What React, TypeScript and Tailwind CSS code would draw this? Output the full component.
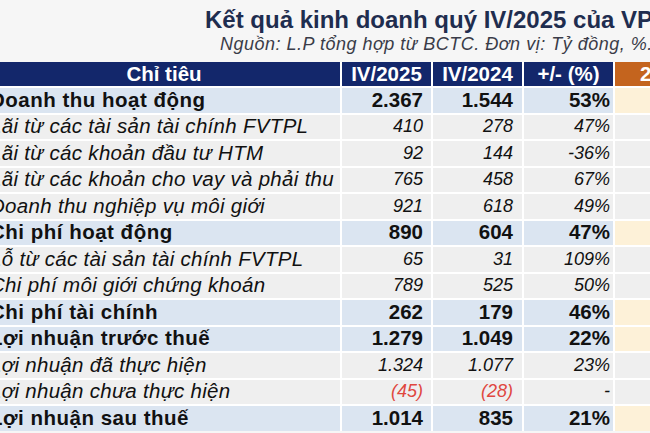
import React from "react";

type Row = {
  label: string;
  a: string;
  b: string;
  c: string;
  bold?: boolean;
  red?: boolean;
};

const rows: Row[] = [
  { label: "Doanh thu hoạt động", a: "2.367", b: "1.544", c: "53%", bold: true },
  { label: "Lãi từ các tài sản tài chính FVTPL", a: "410", b: "278", c: "47%" },
  { label: "Lãi từ các khoản đầu tư HTM", a: "92", b: "144", c: "-36%" },
  { label: "Lãi từ các khoản cho vay và phải thu", a: "765", b: "458", c: "67%" },
  { label: "Doanh thu nghiệp vụ môi giới", a: "921", b: "618", c: "49%" },
  { label: "Chi phí hoạt động", a: "890", b: "604", c: "47%", bold: true },
  { label: "Lỗ từ các tài sản tài chính FVTPL", a: "65", b: "31", c: "109%" },
  { label: "Chi phí môi giới chứng khoán", a: "789", b: "525", c: "50%" },
  { label: "Chi phí tài chính", a: "262", b: "179", c: "46%", bold: true },
  { label: "Lợi nhuận trước thuế", a: "1.279", b: "1.049", c: "22%", bold: true },
  { label: "Lợi nhuận đã thực hiện", a: "1.324", b: "1.077", c: "23%" },
  { label: "Lợi nhuận chưa thực hiện", a: "(45)", b: "(28)", c: "-", red: true },
  { label: "Lợi nhuận sau thuế", a: "1.014", b: "835", c: "21%", bold: true },
];

function DataRow({ r }: { r: Row }) {
  const bg = r.bold ? "bg-[#dbe5f1]" : "bg-[#efefef]";
  const bgO = r.bold ? "bg-[#fdf1d8]" : "bg-[#efefef]";
  const labelCls = r.bold
    ? "font-bold text-[20.5px] tracking-[0.5px]"
    : "italic text-[20.5px] tracking-[0.3px]";
  const numCls = r.bold ? "font-bold text-[20.5px]" : "italic text-[18px]";
  const numColor = r.red ? "text-[#e0473f]" : "text-[#111111]";
  return (
    <div className="flex h-[24.5px] gap-x-[2px]">
      <div className={`w-[352px] shrink-0 ${bg} flex items-center pl-[2px] whitespace-nowrap overflow-hidden text-[#111111] ${labelCls}`}>
        {r.label}
      </div>
      <div className={`w-[89px] shrink-0 ${bg} flex items-center justify-end pr-[8px] ${numCls} ${numColor}`}>
        {r.a}
      </div>
      <div className={`w-[89px] shrink-0 ${bg} flex items-center justify-end pr-[9px] ${numCls} ${numColor}`}>
        {r.b}
      </div>
      <div className={`w-[89px] shrink-0 ${bg} flex items-center justify-end pr-[3px] ${numCls} text-[#111111]`}>
        {r.c}
      </div>
      <div className={`w-[96px] shrink-0 ${bgO}`}></div>
    </div>
  );
}

export default function App() {
  return (
    <div className="w-[650px] h-[433px] overflow-hidden bg-[#f6f6f6] font-['Liberation_Sans',Arial,sans-serif]">
      <div className="pt-[6px] pl-[205px] whitespace-nowrap overflow-hidden">
        <div className="text-[24px] leading-[28px] font-bold text-[#1f2d4f]">
          Kết quả kinh doanh quý IV/2025 của VPS
        </div>
      </div>
      <div className="mt-[0px] pl-[220px] whitespace-nowrap overflow-hidden">
        <div className="text-[18px] leading-[21px] italic tracking-[0.5px] text-[#3a3c48]">
          Nguồn: L.P tổng hợp từ BCTC. Đơn vị: Tỷ đồng, %.
        </div>
      </div>
      <div className="mt-[7px] -ml-[12px] w-[720px] bg-white flex flex-col gap-y-[2px]">
        <div className="flex h-[24px] gap-x-[2px] text-white font-bold text-[20.5px]">
          <div className="w-[352px] shrink-0 bg-[#13276b] flex items-center justify-center">Chỉ tiêu</div>
          <div className="w-[89px] shrink-0 bg-[#13276b] flex items-center justify-center">IV/2025</div>
          <div className="w-[89px] shrink-0 bg-[#13276b] flex items-center justify-center">IV/2024</div>
          <div className="w-[89px] shrink-0 bg-[#13276b] flex items-center justify-center">+/- (%)</div>
          <div className="w-[96px] shrink-0 bg-[#c4641e] flex items-center pl-[25px]">2025</div>
        </div>
        {rows.map((r, i) => (
          <DataRow key={i} r={r} />
        ))}
      </div>
    </div>
  );
}
